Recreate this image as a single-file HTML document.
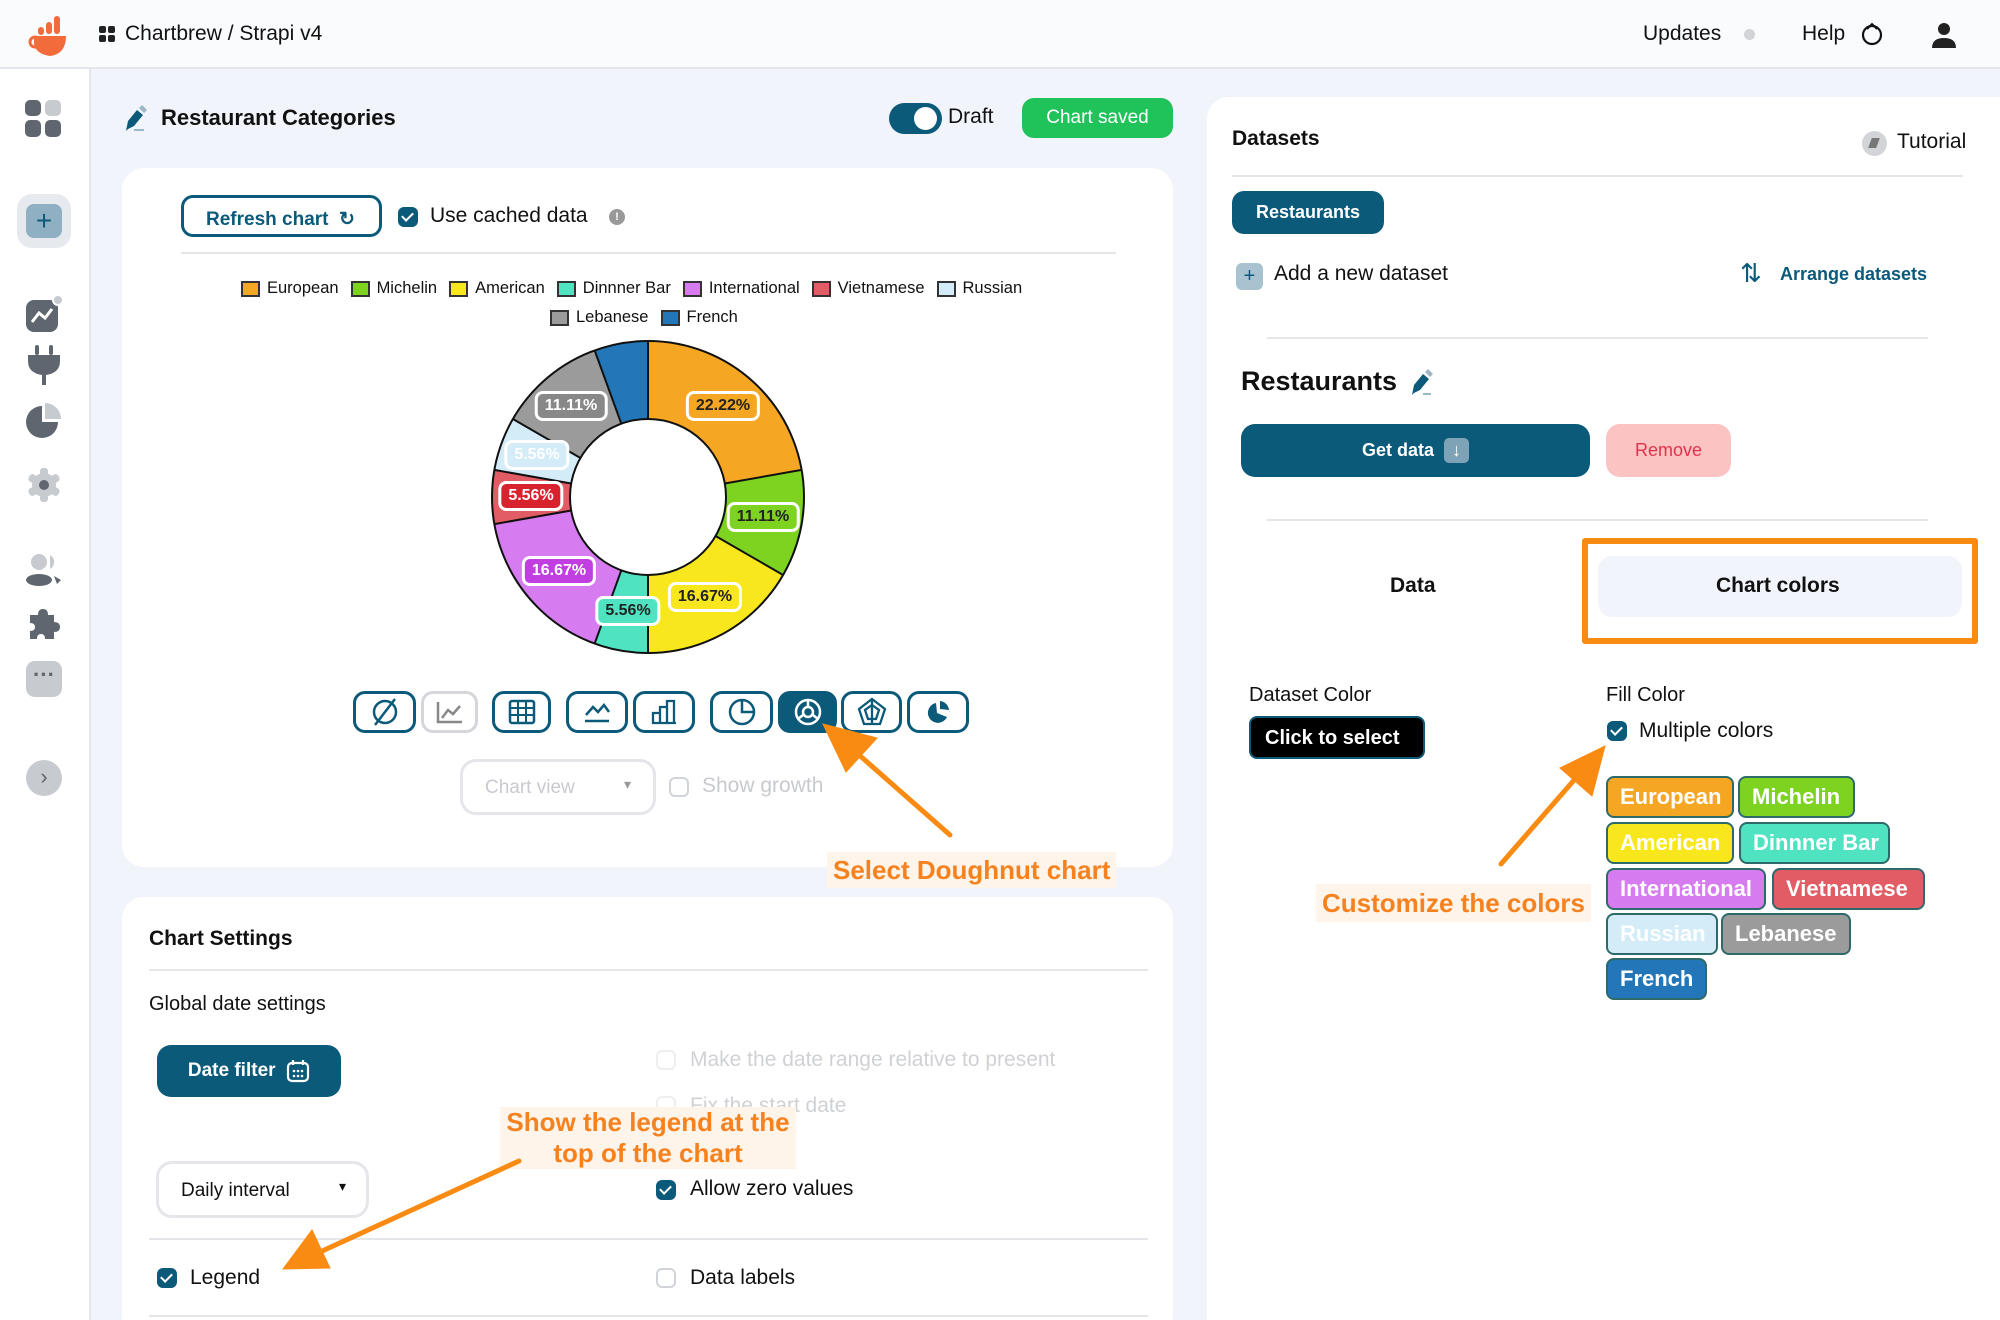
<!DOCTYPE html>
<html style="width:2000px;height:1320px;overflow:hidden"><head><meta charset="utf-8">
<style>
*{box-sizing:border-box;margin:0;padding:0}
body{width:2000px;height:1320px;overflow:hidden;background:#f1f4fa;font-family:"Liberation Sans",sans-serif;color:#111;position:relative}
.a{position:absolute}
.hdr{left:0;top:0;width:2000px;height:69px;background:#fafbfd;border-bottom:2px solid #e3e5ea}
.side{left:0;top:69px;width:91px;height:1251px;background:#fff;border-right:2px solid #e3e5ea}
.card{background:#fff;border-radius:22px}
.t{white-space:nowrap}
.btnd{background:#0c5a7a;color:#fff;border-radius:12px;font-weight:bold;display:flex;align-items:center;justify-content:center}
.cb{width:20px;height:20px;border-radius:6px;background:#0c5a7a}
.cb::after{content:"";position:absolute;left:6px;top:3px;width:5px;height:9px;border:solid #fff;border-width:0 2px 2px 0;transform:rotate(45deg)}
.cbe{width:20px;height:20px;border-radius:6px;border:2px solid #d0d3d8;background:#fff}
.hr{height:2px;background:#e4e6ea}
.lg{display:inline-flex;align-items:center;margin-right:12px}
.lg i{display:inline-block;width:19px;height:16px;border:2px solid #333;margin-right:7px}
.pl{font-size:16px;font-weight:bold;padding:3px 7px;border:3px solid #fff;border-radius:8px;transform:translate(-50%,-50%)}
.ct{width:60px;height:42px;border:3px solid #0c5a7a;border-radius:12px;display:flex;align-items:center;justify-content:center}
.chip{height:42px;border:2px solid #2f6a6a;border-radius:8px;color:#fff;font-weight:bold;font-size:22px;display:flex;align-items:center;padding-left:12px}
.ann{background:#fff4ea;color:#f5821f;font-weight:bold;font-size:26px;padding:0 6px}
</style></head><body>

<div class="a hdr"></div>
<svg class="a" style="left:28px;top:14px" width="44" height="44" viewBox="0 0 44 44">
<rect x="26" y="2" width="6" height="18" rx="3" fill="#f26b3a"/><rect x="18" y="8" width="6" height="12" rx="3" fill="#f26b3a"/><rect x="10" y="13" width="6" height="8" rx="3" fill="#f26b3a"/>
<path d="M6 22 H38 Q38 40 22 42 Q8 40 6 30 Z" fill="#f26b3a"/><circle cx="7" cy="28" r="5" fill="none" stroke="#f26b3a" stroke-width="3"/></svg>
<div class="a" style="left:99px;top:26px;width:16px;height:16px">
<div class="a" style="left:0;top:0;width:7px;height:7px;background:#222;border-radius:2px"></div><div class="a" style="left:9px;top:0;width:7px;height:7px;background:#222;border-radius:2px"></div><div class="a" style="left:0;top:9px;width:7px;height:7px;background:#222;border-radius:2px"></div><div class="a" style="left:9px;top:9px;width:7px;height:7px;background:#222;border-radius:2px"></div></div>
<div class="a t" style="left:125px;top:22px;font-size:21px">Chartbrew / Strapi v4</div>
<div class="a t" style="left:1643px;top:22px;font-size:21px">Updates</div>
<div class="a" style="left:1744px;top:29px;width:11px;height:11px;border-radius:50%;background:#d2d4d8"></div>
<div class="a t" style="left:1802px;top:22px;font-size:21px">Help</div>
<svg class="a" style="left:1860px;top:22px" width="24" height="24" viewBox="0 0 24 24"><circle cx="12" cy="13" r="9" fill="none" stroke="#111" stroke-width="2.2"/><path d="M7 7 L12 2 L17 7" fill="none" stroke="#111" stroke-width="2"/></svg>
<svg class="a" style="left:1930px;top:20px" width="28" height="30" viewBox="0 0 28 30"><circle cx="14" cy="9" r="6" fill="#222"/><path d="M2 28 Q2 18 14 18 Q26 18 26 28 Z" fill="#222"/></svg>

<div class="a side"></div>
<svg class="a" style="left:24px;top:99px" width="40" height="40" viewBox="0 0 40 40"><rect x="1" y="1" width="16" height="16" rx="5" fill="#5f6670"/><rect x="21" y="1" width="16" height="16" rx="5" fill="#c7cace"/><rect x="1" y="21" width="16" height="17" rx="5" fill="#5f6670"/><rect x="21" y="21" width="16" height="17" rx="5" fill="#5f6670"/></svg>
<div class="a" style="left:17px;top:194px;width:54px;height:54px;border-radius:15px;background:#e6e9ed"></div>
<div class="a" style="left:26px;top:204px;width:36px;height:34px;border-radius:8px;background:#8fb0c3;color:#0c5a7a;font-size:28px;text-align:center;line-height:34px">+</div>
<svg class="a" style="left:24px;top:294px" width="40" height="40" viewBox="0 0 40 40"><rect x="2" y="6" width="32" height="32" rx="8" fill="#5f6670"/><circle cx="34" cy="6" r="5" fill="#c7cace" stroke="#fff" stroke-width="2"/><path d="M8 28 L15 19 L21 24 L28 15" stroke="#fff" stroke-width="3" fill="none"/></svg>
<svg class="a" style="left:26px;top:345px" width="36" height="42" viewBox="0 0 36 42"><rect x="9" y="0" width="4" height="10" rx="2" fill="#5f6670"/><rect x="23" y="0" width="4" height="10" rx="2" fill="#5f6670"/><path d="M2 10 H34 V16 Q34 28 20 30 V40 H16 V30 Q2 28 2 16 Z" fill="#5f6670"/></svg>
<svg class="a" style="left:24px;top:400px" width="40" height="40" viewBox="0 0 40 40"><path d="M18 6 A16 16 0 1 0 34 22 H18 Z" fill="#5f6670"/><path d="M21 3 A16 16 0 0 1 37 19 H21 Z" fill="#c7cace"/></svg>
<svg class="a" style="left:25px;top:466px" width="38" height="38" viewBox="0 0 38 38"><g fill="#c7cace"><circle cx="19" cy="19" r="12"/><rect x="15" y="2" width="8" height="34" rx="3"/><rect x="15" y="2" width="8" height="34" rx="3" transform="rotate(60 19 19)"/><rect x="15" y="2" width="8" height="34" rx="3" transform="rotate(120 19 19)"/></g><circle cx="19" cy="19" r="5" fill="#5f6670"/></svg>
<svg class="a" style="left:24px;top:552px" width="40" height="36" viewBox="0 0 40 36"><circle cx="15" cy="10" r="8" fill="#c7cace"/><path d="M26 3 A8 8 0 0 1 26 17" fill="#c7cace"/><ellipse cx="15" cy="28" rx="13" ry="6" fill="#5f6670"/><path d="M30 24 L37 28 L33 32 Z" fill="#5f6670"/></svg>
<svg class="a" style="left:26px;top:607px" width="36" height="36" viewBox="0 0 36 36"><path d="M4 8 H12 Q12 2 17 2 Q22 2 22 8 H28 V15 Q34 15 34 20 Q34 25 28 25 V32 H19 Q19 27 15 27 Q11 27 11 32 H4 V24 Q9 24 9 20 Q9 16 4 16 Z" fill="#5f6670"/></svg>
<div class="a" style="left:26px;top:661px;width:36px;height:36px;border-radius:9px;background:#c7cace;color:#5f6670;font-size:22px;text-align:center;line-height:28px;font-weight:bold">···</div>
<div class="a" style="left:26px;top:760px;width:36px;height:36px;border-radius:50%;background:#c7cace;color:#5f6670;font-size:22px;text-align:center;line-height:34px">›</div>

<svg class="a" style="left:124px;top:105px" width="24" height="28" viewBox="0 0 24 28"><path d="M4 24 L2 26 L4 16 L13 5 L19 10 L10 21 Z" fill="#0c5a7a"/><path d="M15 3 L18 0 L23 5 L20 8 Z" fill="#9bb7c6"/><rect x="10" y="24" width="10" height="2" fill="#9bb7c6"/></svg>
<div class="a t" style="left:161px;top:105px;font-size:22px;font-weight:bold">Restaurant Categories</div>
<div class="a" style="left:889px;top:103px;width:53px;height:31px;border-radius:16px;background:#0c5a7a"></div>
<div class="a" style="left:914px;top:107px;width:23px;height:23px;border-radius:50%;background:#fff"></div>
<div class="a t" style="left:948px;top:105px;font-size:21px">Draft</div>
<div class="a btnd" style="left:1022px;top:98px;width:151px;height:40px;background:#20c25a;font-size:19px;font-weight:normal">Chart saved</div>

<div class="a card" style="left:122px;top:168px;width:1051px;height:699px"></div>
<div class="a" style="left:181px;top:195px;width:201px;height:42px;border:3px solid #0c5a7a;border-radius:12px;color:#0c5a7a;font-size:19px;font-weight:bold;padding:10px 0 0 22px">Refresh chart&nbsp; ↻</div>
<div class="a cb" style="left:398px;top:207px"></div>
<div class="a t" style="left:430px;top:204px;font-size:21px">Use cached data</div>
<div class="a" style="left:609px;top:209px;width:16px;height:16px;border-radius:50%;background:#999;color:#fff;font-size:11px;text-align:center;line-height:16px;font-weight:bold">!</div>
<div class="a hr" style="left:181px;top:252px;width:935px"></div>
<div class="a t" style="left:241px;top:279px;font-size:16.5px">
<span class="lg"><i style="background:#f5a623"></i>European</span><span class="lg"><i style="background:#7ed321"></i>Michelin</span><span class="lg"><i style="background:#f8e71c"></i>American</span><span class="lg"><i style="background:#50e3c2"></i>Dinnner Bar</span><span class="lg"><i style="background:#d67cf0"></i>International</span><span class="lg"><i style="background:#e15c64"></i>Vietnamese</span><span class="lg"><i style="background:#d3ecf8"></i>Russian</span></div>
<div class="a t" style="left:550px;top:308px;font-size:16.5px"><span class="lg"><i style="background:#9b9b9b"></i>Lebanese</span><span class="lg"><i style="background:#2376b7"></i>French</span></div>

<svg class="a" style="left:0;top:0" width="2000" height="1320" viewBox="0 0 2000 1320">
<g transform="rotate(-90 648 497)" fill="none" stroke-width="78">
<circle cx="648" cy="497" r="117" stroke="#f5a623" stroke-dasharray="163.36 1000" stroke-dashoffset="0"/>
<circle cx="648" cy="497" r="117" stroke="#7ed321" stroke-dasharray="81.68 1000" stroke-dashoffset="-163.36"/>
<circle cx="648" cy="497" r="117" stroke="#f8e71c" stroke-dasharray="122.52 1000" stroke-dashoffset="-245.04"/>
<circle cx="648" cy="497" r="117" stroke="#50e3c2" stroke-dasharray="40.84 1000" stroke-dashoffset="-367.56"/>
<circle cx="648" cy="497" r="117" stroke="#d67cf0" stroke-dasharray="122.52 1000" stroke-dashoffset="-408.40"/>
<circle cx="648" cy="497" r="117" stroke="#e15c64" stroke-dasharray="40.84 1000" stroke-dashoffset="-530.92"/>
<circle cx="648" cy="497" r="117" stroke="#d3ecf8" stroke-dasharray="40.84 1000" stroke-dashoffset="-571.76"/>
<circle cx="648" cy="497" r="117" stroke="#9b9b9b" stroke-dasharray="81.68 1000" stroke-dashoffset="-612.60"/>
<circle cx="648" cy="497" r="117" stroke="#2376b7" stroke-dasharray="40.84 1000" stroke-dashoffset="-694.28"/>
</g>
<g stroke="#111" stroke-width="2" fill="none">
<circle cx="648" cy="497" r="156"/><circle cx="648" cy="497" r="78"/>
<line x1="648" y1="419" x2="648" y2="341"/>
<line x1="648" y1="419" x2="648" y2="341" transform="rotate(80 648 497)"/>
<line x1="648" y1="419" x2="648" y2="341" transform="rotate(120 648 497)"/>
<line x1="648" y1="419" x2="648" y2="341" transform="rotate(180 648 497)"/>
<line x1="648" y1="419" x2="648" y2="341" transform="rotate(200 648 497)"/>
<line x1="648" y1="419" x2="648" y2="341" transform="rotate(260 648 497)"/>
<line x1="648" y1="419" x2="648" y2="341" transform="rotate(280 648 497)"/>
<line x1="648" y1="419" x2="648" y2="341" transform="rotate(300 648 497)"/>
<line x1="648" y1="419" x2="648" y2="341" transform="rotate(340 648 497)"/>
</g>
</svg>
<div class="a pl" style="left:723px;top:406px;background:#f5a623;color:#222">22.22%</div>
<div class="a pl" style="left:763px;top:517px;background:#7ed321;color:#222">11.11%</div>
<div class="a pl" style="left:705px;top:597px;background:#f8e71c;color:#222">16.67%</div>
<div class="a pl" style="left:628px;top:611px;background:#50e3c2;color:#222">5.56%</div>
<div class="a pl" style="left:559px;top:571px;background:#c13ee0;color:#fff">16.67%</div>
<div class="a pl" style="left:531px;top:496px;background:#d8232f;color:#fff">5.56%</div>
<div class="a pl" style="left:537px;top:455px;background:#d3ecf8;color:#fff">5.56%</div>
<div class="a pl" style="left:571px;top:406px;background:#888;color:#fff">11.11%</div>

<div class="a ct" style="left:353px;top:691px;width:63px"><svg width="30" height="30" viewBox="0 0 30 30"><circle cx="15" cy="15" r="11" fill="none" stroke="#0c5a7a" stroke-width="2.5"/><line x1="5" y1="28" x2="25" y2="2" stroke="#0c5a7a" stroke-width="2.5"/></svg></div>
<div class="a ct" style="left:421px;top:691px;width:57px;border-color:#d4d6da"><svg width="28" height="24" viewBox="0 0 28 24"><path d="M2 2 V22 H26 M6 18 L12 10 L17 14 L24 6" stroke="#888" stroke-width="2.5" fill="none"/></svg></div>
<div class="a ct" style="left:492px;top:691px;width:59px"><svg width="28" height="26" viewBox="0 0 28 26"><rect x="2" y="2" width="24" height="22" rx="2" fill="none" stroke="#0c5a7a" stroke-width="2.5"/><path d="M2 9 H26 M2 16 H26 M10 2 V24 M18 2 V24" stroke="#0c5a7a" stroke-width="2"/></svg></div>
<div class="a ct" style="left:566px;top:691px;width:62px"><svg width="28" height="24" viewBox="0 0 28 24"><path d="M3 15 L10 7 L15 12 L21 5 L26 12 M2 21 H26" stroke="#0c5a7a" stroke-width="2.5" fill="none"/></svg></div>
<div class="a ct" style="left:633px;top:691px;width:62px"><svg width="28" height="26" viewBox="0 0 28 26"><path d="M3 24 V14 H10 V24 Z M10 24 V8 H17 V24 M17 24 V2 H24 V24 Z M2 24 H26" stroke="#0c5a7a" stroke-width="2.3" fill="none"/></svg></div>
<div class="a ct" style="left:710px;top:691px;width:63px"><svg width="30" height="30" viewBox="0 0 30 30"><circle cx="15" cy="15" r="12" fill="none" stroke="#0c5a7a" stroke-width="2.5"/><path d="M15 3 V15 H27" stroke="#0c5a7a" stroke-width="2.5" fill="none"/></svg></div>
<div class="a ct" style="left:778px;top:691px;width:59px;background:#0c5a7a"><svg width="30" height="30" viewBox="0 0 30 30"><circle cx="15" cy="15" r="12" fill="none" stroke="#fff" stroke-width="2.5"/><circle cx="15" cy="15" r="5" fill="none" stroke="#fff" stroke-width="2.5"/><path d="M15 3 V10 M5 22 L10 18 M25 22 L20 18" stroke="#fff" stroke-width="2.5"/></svg></div>
<div class="a ct" style="left:841px;top:691px;width:61px"><svg width="30" height="30" viewBox="0 0 30 30"><path d="M15 2 L28 12 L23 27 H7 L2 12 Z M15 8 L22 13 L19 22 H11 L8 13 Z M15 2 V27" stroke="#0c5a7a" stroke-width="2.3" fill="none"/></svg></div>
<div class="a ct" style="left:907px;top:691px;width:62px"><svg width="30" height="30" viewBox="0 0 30 30"><path d="M13 6 A10 10 0 1 0 24 20 L14 16 Z" fill="#0c5a7a"/><path d="M17 4 A10 10 0 0 1 26 13 L17 12 Z" fill="#0c5a7a"/></svg></div>

<div class="a" style="left:460px;top:759px;width:196px;height:56px;border:3px solid #e4e6ea;border-radius:16px;color:#c8cacf;font-size:19px;padding:15px 0 0 22px">Chart view<span style="position:absolute;right:22px;top:14px;font-size:14px;color:#999">▾</span></div>
<div class="a cbe" style="left:669px;top:777px"></div>
<div class="a t" style="left:702px;top:774px;font-size:21px;color:#c8cacf">Show growth</div>
<div class="a ann t" style="left:827px;top:852px;height:36px;line-height:36px">Select Doughnut chart</div>

<div class="a card" style="left:122px;top:897px;width:1051px;height:440px"></div>
<div class="a t" style="left:149px;top:927px;font-size:21px;font-weight:bold">Chart Settings</div>
<div class="a hr" style="left:149px;top:969px;width:999px"></div>
<div class="a t" style="left:149px;top:993px;font-size:20px">Global date settings</div>
<div class="a btnd" style="left:157px;top:1045px;width:184px;height:52px;font-size:19px;border-radius:14px">Date filter&nbsp;&nbsp;<svg width="24" height="24" viewBox="0 0 24 24"><rect x="2" y="4" width="20" height="18" rx="4" fill="none" stroke="#fff" stroke-width="2.2"/><path d="M7 1 V6 M17 1 V6" stroke="#fff" stroke-width="2.2"/><g fill="#fff"><circle cx="8" cy="12" r="1.3"/><circle cx="12" cy="12" r="1.3"/><circle cx="16" cy="12" r="1.3"/><circle cx="8" cy="17" r="1.3"/><circle cx="12" cy="17" r="1.3"/><circle cx="16" cy="17" r="1.3"/></g></svg></div>
<div class="a cbe" style="left:656px;top:1050px;border-color:#eceef0"></div>
<div class="a t" style="left:690px;top:1048px;font-size:21px;color:#cfd1d5">Make the date range relative to present</div>
<div class="a cbe" style="left:656px;top:1096px;border-color:#eceef0"></div>
<div class="a t" style="left:690px;top:1094px;font-size:21px;color:#cfd1d5">Fix the start date</div>
<div class="a ann" style="left:500px;top:1107px;width:296px;text-align:center;line-height:31px;padding:0">Show the legend at the<br>top of the chart</div>
<div class="a" style="left:156px;top:1161px;width:213px;height:57px;border:3px solid #e4e6ea;border-radius:16px;font-size:19px;padding:16px 0 0 22px">Daily interval<span style="position:absolute;right:20px;top:14px;font-size:14px">▾</span></div>
<div class="a cb" style="left:656px;top:1180px"></div>
<div class="a t" style="left:690px;top:1177px;font-size:21px">Allow zero values</div>
<div class="a hr" style="left:149px;top:1238px;width:999px"></div>
<div class="a cb" style="left:157px;top:1268px"></div>
<div class="a t" style="left:190px;top:1266px;font-size:21px">Legend</div>
<div class="a cbe" style="left:656px;top:1268px"></div>
<div class="a t" style="left:690px;top:1266px;font-size:21px">Data labels</div>
<div class="a hr" style="left:149px;top:1315px;width:999px"></div>

<div class="a card" style="left:1207px;top:97px;width:793px;height:1223px;border-radius:22px 0 0 0"></div>
<div class="a t" style="left:1232px;top:127px;font-size:21px;font-weight:bold">Datasets</div>
<div class="a" style="left:1862px;top:131px;width:25px;height:25px;border-radius:50%;background:#d2d4d8"></div>
<div class="a" style="left:1870px;top:138px;width:8px;height:10px;background:#777;transform:skew(-20deg)"></div>
<div class="a t" style="left:1897px;top:130px;font-size:21px">Tutorial</div>
<div class="a hr" style="left:1232px;top:175px;width:731px"></div>
<div class="a btnd" style="left:1232px;top:191px;width:152px;height:43px;font-size:18px">Restaurants</div>
<div class="a" style="left:1236px;top:263px;width:27px;height:27px;border-radius:6px;background:#a8c2d0;color:#0c5a7a;text-align:center;line-height:26px;font-size:20px">+</div>
<div class="a t" style="left:1274px;top:262px;font-size:21px">Add a new dataset</div>
<div class="a t" style="left:1740px;top:258px;font-size:26px;color:#0c5a7a">⇅</div>
<div class="a t" style="left:1780px;top:264px;font-size:18px;font-weight:bold;color:#0c5a7a">Arrange datasets</div>
<div class="a hr" style="left:1267px;top:337px;width:661px"></div>
<div class="a t" style="left:1241px;top:366px;font-size:27px;font-weight:bold">Restaurants</div>
<svg class="a" style="left:1410px;top:369px" width="24" height="28" viewBox="0 0 24 28"><path d="M4 24 L2 26 L4 16 L13 5 L19 10 L10 21 Z" fill="#0c5a7a"/><path d="M15 3 L18 0 L23 5 L20 8 Z" fill="#9bb7c6"/><rect x="13" y="24" width="8" height="2" fill="#9bb7c6"/></svg>
<div class="a btnd" style="left:1241px;top:424px;width:349px;height:53px;font-size:18px;border-radius:14px">Get data&nbsp;&nbsp;<span style="display:inline-block;width:25px;height:25px;border-radius:5px;background:#7fa3b6;text-align:center;line-height:25px">↓</span></div>
<div class="a btnd" style="left:1606px;top:424px;width:125px;height:53px;font-size:18px;border-radius:14px;background:#fcc3c3;color:#e0324a;font-weight:normal">Remove</div>
<div class="a hr" style="left:1267px;top:519px;width:661px"></div>
<div class="a t" style="left:1390px;top:574px;font-size:21px;font-weight:bold">Data</div>
<div class="a" style="left:1598px;top:556px;width:364px;height:61px;border-radius:14px;background:#f1f4fa"></div>
<div class="a" style="left:1582px;top:538px;width:396px;height:106px;border:6px solid #f98b12;border-radius:3px"></div>
<div class="a t" style="left:1716px;top:574px;font-size:21px;font-weight:bold">Chart colors</div>
<div class="a t" style="left:1249px;top:684px;font-size:20px">Dataset Color</div>
<div class="a" style="left:1249px;top:716px;width:176px;height:43px;background:#000;border-radius:8px;border:2px solid #0c5a7a;color:#fff;font-weight:bold;font-size:20px;padding:9px 0 0 14px">Click to select</div>
<div class="a t" style="left:1606px;top:684px;font-size:20px">Fill Color</div>
<div class="a cb" style="left:1607px;top:721px"></div>
<div class="a t" style="left:1639px;top:719px;font-size:21px">Multiple colors</div>
<div class="a chip" style="left:1606px;top:776px;width:128px;background:#f5a623">European</div>
<div class="a chip" style="left:1738px;top:776px;width:117px;background:#7ed321">Michelin</div>
<div class="a chip" style="left:1606px;top:822px;width:128px;background:#f8e71c">American</div>
<div class="a chip" style="left:1739px;top:822px;width:151px;background:#50e3c2">Dinnner Bar</div>
<div class="a chip" style="left:1606px;top:868px;width:160px;background:#d67cf0">International</div>
<div class="a chip" style="left:1772px;top:868px;width:153px;background:#e15c64">Vietnamese</div>
<div class="a chip" style="left:1606px;top:913px;width:112px;background:#d3ecf8">Russian</div>
<div class="a chip" style="left:1721px;top:913px;width:130px;background:#9b9b9b">Lebanese</div>
<div class="a chip" style="left:1606px;top:958px;width:101px;background:#2376b7">French</div>
<div class="a ann t" style="left:1316px;top:884px;height:38px;line-height:38px">Customize the colors</div>

<svg class="a" style="left:0;top:0" width="2000" height="1320" viewBox="0 0 2000 1320">
<g fill="#f98b12" stroke="#f98b12" stroke-linecap="round">
<line x1="950" y1="835" x2="858" y2="754" stroke-width="5"/><path d="M823 724 L877 738 L846 772 Z"/>
<line x1="519" y1="1161" x2="320" y2="1252" stroke-width="5"/><path d="M283 1269 L312 1230 L330 1268 Z"/>
<line x1="1501" y1="864" x2="1575" y2="779" stroke-width="5"/><path d="M1605 746 L1592 796 L1560 768 Z"/>
</g></svg>
</body></html>
